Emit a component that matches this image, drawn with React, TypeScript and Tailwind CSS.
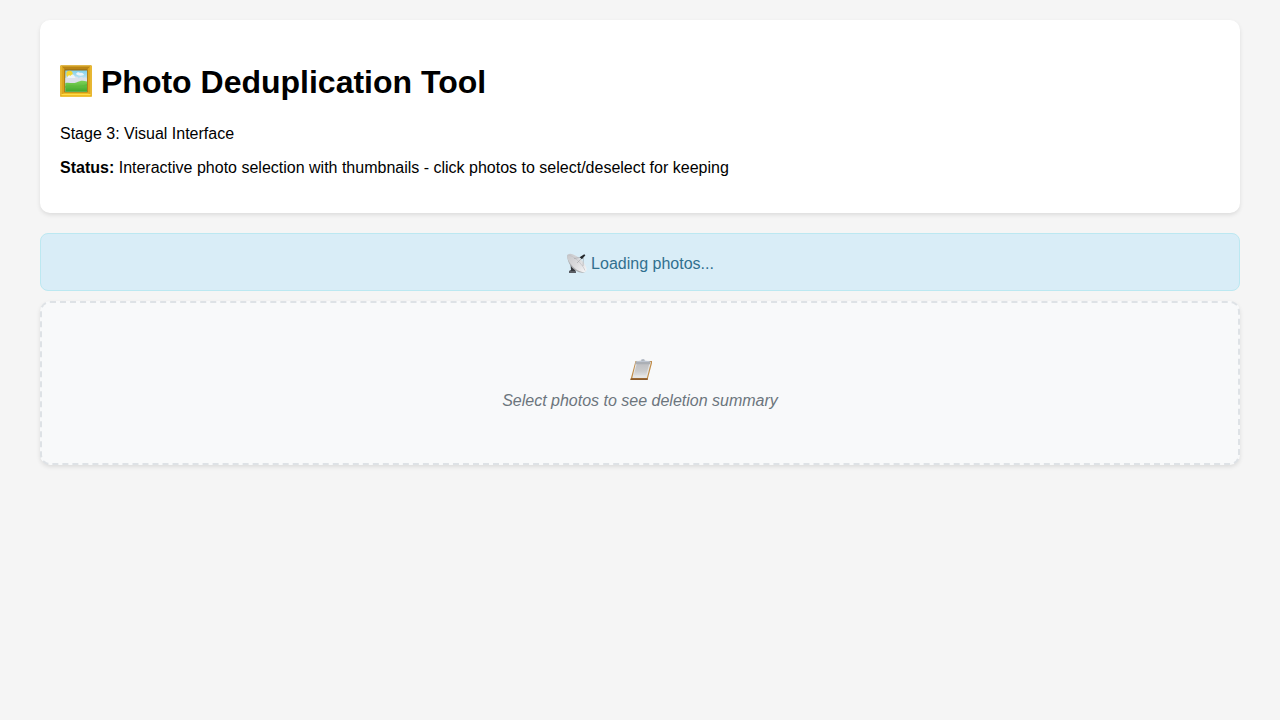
function FramedPicture() {
  return (
    <svg className="mt-px h-8 w-8 shrink-0" viewBox="0 0 32 32" aria-hidden="true">
      <defs>
        <linearGradient id="sky" x1="0" y1="0" x2="0" y2="1">
          <stop offset="0" stopColor="#7fd0ee" />
          <stop offset="0.5" stopColor="#d6eaf2" />
        </linearGradient>
        <linearGradient id="grass" x1="0" y1="0" x2="0" y2="1">
          <stop offset="0" stopColor="#7ed257" />
          <stop offset="1" stopColor="#3fa62b" />
        </linearGradient>
      </defs>
      <rect x="0.2" y="0.4" width="31.6" height="31.4" rx="0.5" fill="#e9b21d" />
      <path d="M.5.500h31L27 5H5z" fill="#b98516" />
      <path d="M.5.500 5 5v22L.5 31.500z" fill="#dca41c" />
      <path d="M31.500.500 27 5v22l4.500 4.500z" fill="#dfa81e" />
      <path d="M.5 31.500 5 27h22l4.500 4.500z" fill="#f0be23" />
      <path d="M1 1h30M1.200 1v29M30.800 1v29" fill="none" stroke="#edc13d" strokeWidth="0.8" />
      <path d="M1.500 29.500h29" stroke="#ffdc4c" strokeWidth="1" />
      <rect x="4.300" y="4.300" width="23.400" height="23.200" fill="#9b7019" />
      <rect x="5.300" y="5.500" width="21.700" height="21.200" fill="url(#sky)" />
      <path d="M5.500 17v-4c2-1 3-1 4 0 1-3 4-3 5-1 2-1 4 0 4 2 2-3 4-2 5-1 2-1 3 0 3.500 1v5H5.500z" fill="#dce0ea" />
      <circle cx="9.500" cy="9" r="3.200" fill="#f4d62f" />
      <path d="M7.500 12c1-2 2-2 3-1 1-2 3-2 4 0l1 2H7.500zM16 9c1-2 3-2 4-1 2-1 4 1 4 2-3 1-6 1-8-1z" fill="#edf4f8" />
      <path d="M5.300 18c4-1 7 1 11-.500 4-2 7-2 10.700-1v10.200H5.300z" fill="url(#grass)" />
      <path d="M5.300 21c7-2 11 2 21.700-2v2c-8 4-14-1-21.700 2z" fill="#5cba3c" />
    </svg>
  );
}

function SatelliteDish() {
  return (
    <svg className="mt-[-1px] mr-[4px] h-[21px] w-[21px] shrink-0 overflow-visible" viewBox="0 0 21 21" aria-hidden="true">
      <defs>
        <linearGradient id="dish" x1="0" y1="0" x2="1" y2="0">
          <stop offset="0" stopColor="#c8c8cb" />
          <stop offset="0.5" stopColor="#dadadc" />
          <stop offset="1" stopColor="#f4f4f5" />
        </linearGradient>
      </defs>
      <path d="m4.500 11 5 4v3.500l.300 1.500H3v-2l2-1z" fill="#34373c" />
      <path d="M3 18h6.500l.500 2H3z" fill="#595d63" />
      <path d="M1.500 1.500C.5 7 4 14 9.500 17.500c4 2.500 8 3 10 1z" fill="#aeb0b3" />
      <ellipse cx="10.900" cy="10" rx="12.200" ry="5.300" transform="rotate(43 10.900 10)" fill="url(#dish)" />
      <path d="M2 2C7 2.500 16 10 19 17.500" fill="none" stroke="#c0c0c4" strokeWidth="0.7" />
      <path d="m11 10 5-5M8 5.500 16 4m1 9 .500-8" fill="none" stroke="#96989d" strokeWidth="0.500" />
      <path d="m13.700 4.300 4.500-3.100 1.200 1-3.500 4z" fill="#24272b" />
    </svg>
  );
}

function Clipboard() {
  return (
    <svg className="mx-auto block h-[22px] w-[24px]" viewBox="0 0 24 22" aria-hidden="true">
      <defs>
        <linearGradient id="paper" x1="0" y1="0" x2="0" y2="1">
          <stop offset="0" stopColor="#bfc0c3" />
          <stop offset="0.6" stopColor="#cbcbcc" />
          <stop offset="1" stopColor="#dededf" />
        </linearGradient>
      </defs>
      <path d="M7.500 2h17l-5 19H2.400z" fill="#c28d48" />
      <path d="m2.800 19.300h17.100l-.400 1.700H2.400z" fill="#8c5c2e" />
      <path d="M8 3h15l-4.100 15.900H4.300z" fill="#e5e5e5" />
      <path d="M8.700 5h12.600l-3.200 11.500H5.700z" fill="url(#paper)" />
      <path d="m8 2.200 4.800-.500c.800-2 4-2.200 4 0l5.700.500-.600 3H7.200z" fill="#abafb5" />
      <path d="M13 1.600c1-1.400 3-1.400 3.300 0M8.500 2.400h13" fill="none" stroke="#c7cfdd" strokeWidth="0.8" />
    </svg>
  );
}

export default function App() {
  return (
    <div className="min-h-screen bg-[#f5f5f5] py-5 font-['Liberation_Sans',Arial,sans-serif] text-base leading-normal text-black">
      <main className="mx-auto w-[1200px]">
        <header className="h-[193px] rounded-[10px] bg-white px-5 pt-[44px] shadow-[0_2px_4px_rgba(0,0,0,0.1)]">
          <h1 className="flex h-[37px] gap-[9px] text-[32px] leading-[37px] font-bold">
            <FramedPicture />
            <span>Photo Deduplication Tool</span>
          </h1>
          <p className="mt-[24px] leading-[18px]">Stage 3: Visual Interface</p>
          <p className="mt-4 leading-[18px]">
            <strong>Status:</strong> Interactive photo selection with thumbnails - click photos to select/deselect for keeping
          </p>
        </header>
        <section className="mt-5 flex h-[58px] justify-center rounded-lg border border-[#bce8f1] bg-[#d9edf7] pt-[20px] leading-[20px] text-[#31708f]">
          <SatelliteDish />
          <span>Loading photos...</span>
        </section>
        <section className="mt-[10px] h-[164px] rounded-[10px] border-2 border-dashed border-[#dee2e6] bg-[#f8f9fa] pt-[56px] text-center text-[#6c757d] italic shadow-[0_2px_4px_rgba(0,0,0,0.1)]">
          <Clipboard />
          <p className="mt-[11px] leading-[18px]">Select photos to see deletion summary</p>
        </section>
      </main>
    </div>
  );
}
